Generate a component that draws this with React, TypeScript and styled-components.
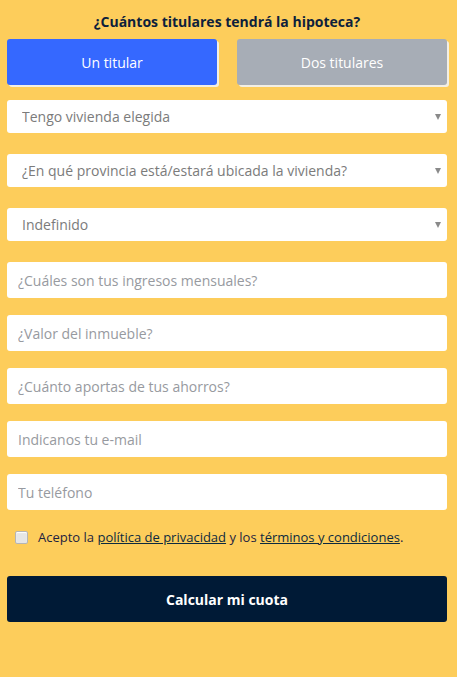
import React, { useState } from "react";
import styled, { createGlobalStyle } from "styled-components";

const GlobalStyle = createGlobalStyle`
  html, body {
    margin: 0;
    padding: 0;
    background: #fdcd5b;
  }
  body {
    font-family: "Open Sans", "Liberation Sans", sans-serif;
  }
`;

const Form = styled.form`
  padding: 13px 10px 40px 7px;
  display: flex;
  flex-direction: column;
`;

const Title = styled.h3`
  margin: 0 0 8px;
  text-align: center;
  font-size: 14px;
  font-weight: 700;
  line-height: 18px;
  color: #0d1f3c;
`;

const Toggle = styled.div`
  display: grid;
  grid-template-columns: 1fr 1fr;
  gap: 20px;
  margin-bottom: 15px;
`;

const ToggleButton = styled.button<{ $active?: boolean }>`
  height: 46px;
  border: none;
  border-radius: 3px;
  background: ${p => (p.$active ? "#3568ff" : "#a7adb6")};
  color: #fff;
  font-family: "Open Sans", "Liberation Sans", sans-serif;
  font-size: 14px;
  box-shadow: 2px 2px 0 #f3efe4;
  cursor: pointer;
`;

const SelectWrap = styled.div`
  position: relative;
  margin-bottom: 21px;

  &::after {
    content: "";
    position: absolute;
    right: 6px;
    top: 14px;
    border-left: 3px solid transparent;
    border-right: 3px solid transparent;
    border-top: 6px solid #8a8a8a;
    pointer-events: none;
  }
`;

const Select = styled.select`
  display: block;
  width: 100%;
  height: 33px;
  appearance: none;
  border: none;
  border-radius: 3px;
  background: #fff;
  padding: 0 20px 0 15px;
  font-family: "Open Sans", "Liberation Sans", sans-serif;
  font-size: 14px;
  color: #7b7b7b;
  outline: none;
`;

const Input = styled.input`
  display: block;
  box-sizing: border-box;
  width: 100%;
  height: 36px;
  border: none;
  border-radius: 3px;
  background: #fff;
  padding: 0 11px;
  margin-bottom: 17px;
  font-family: "Open Sans", "Liberation Sans", sans-serif;
  font-size: 14px;
  color: #333;
  outline: none;

  &::placeholder {
    color: #979aa0;
  }
`;

const Consent = styled.label`
  display: flex;
  align-items: center;
  gap: 10px;
  padding-left: 8px;
  margin: 1px 0 30px;
  font-size: 13px;
  color: #1d2340;
  line-height: 18px;

  a {
    color: #0c2a3f;
    text-decoration: underline;
  }
`;

const Check = styled.input`
  appearance: none;
  flex: none;
  width: 13px;
  height: 13px;
  margin: 0;
  border: 1px solid #b5b5b5;
  border-radius: 2px;
  background: #e6e6e6;
  box-shadow: inset 0 1px 1px #fff;
`;

const Submit = styled.button`
  height: 46px;
  border: none;
  border-radius: 3px;
  background: #001a36;
  color: #fff;
  font-family: "Open Sans", "Liberation Sans", sans-serif;
  font-size: 14px;
  font-weight: 700;
  cursor: pointer;
`;

const selects = [
  "Tengo vivienda elegida",
  "¿En qué provincia está/estará ubicada la vivienda?",
  "Indefinido",
];

const inputs = [
  "¿Cuáles son tus ingresos mensuales?",
  "¿Valor del inmueble?",
  "¿Cuánto aportas de tus ahorros?",
  "Indicanos tu e-mail",
  "Tu teléfono",
];

const App: React.FC = () => {
  const [holders, setHolders] = useState<number>(1);

  return (
    <>
      <GlobalStyle />
      <Form onSubmit={e => e.preventDefault()}>
        <Title>¿Cuántos titulares tendrá la hipoteca?</Title>
        <Toggle>
          <ToggleButton type="button" $active={holders === 1} onClick={() => setHolders(1)}>
            Un titular
          </ToggleButton>
          <ToggleButton type="button" $active={holders === 2} onClick={() => setHolders(2)}>
            Dos titulares
          </ToggleButton>
        </Toggle>

        {selects.map(s => (
          <SelectWrap key={s}>
            <Select defaultValue={s}>
              <option>{s}</option>
            </Select>
          </SelectWrap>
        ))}

        {inputs.map(p => (
          <Input key={p} type="text" placeholder={p} />
        ))}

        <Consent>
          <Check type="checkbox" />
          <span>
            Acepto la <a href="#">política de privacidad</a> y los{" "}
            <a href="#">términos y condiciones</a>.
          </span>
        </Consent>

        <Submit type="submit">Calcular mi cuota</Submit>
      </Form>
    </>
  );
};

export default App;
